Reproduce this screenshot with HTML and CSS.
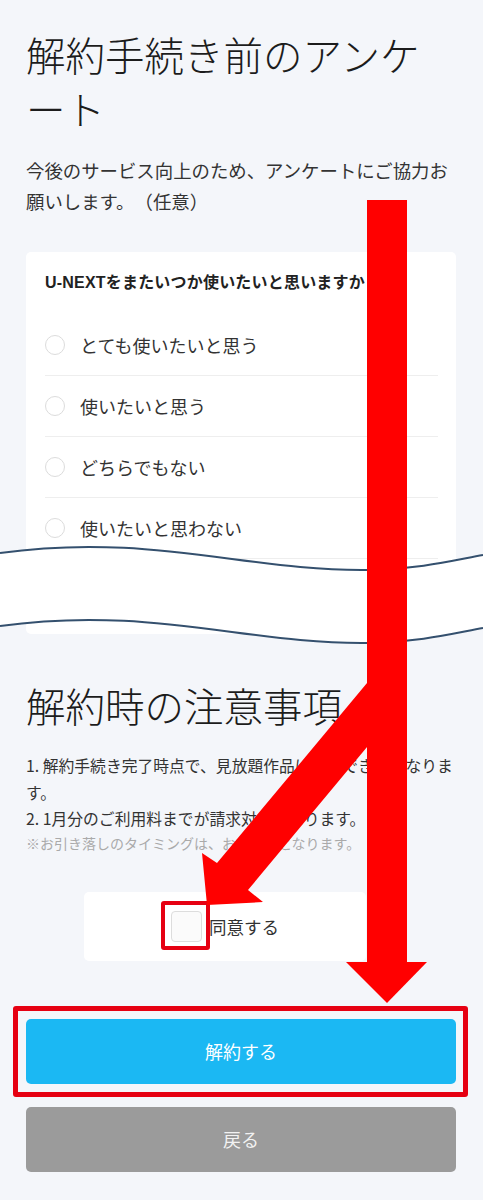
FILE: index.html
```html
<!DOCTYPE html>
<html lang="ja">
<head>
<meta charset="utf-8">
<title>解約手続き</title>
<link rel="stylesheet" href="styles.css">
</head>
<body>
<div class="page">
  <h1 class="title">解約手続き前のアンケート</h1>
  <p class="lead">今後のサービス向上のため、アンケートにご協力お願いします。（任意）</p>

  <section class="survey">
    <p class="q">U-NEXTをまたいつか使いたいと思いますか</p>
    <ul class="opts">
      <li class="opt"><span class="radio"></span><span>とても使いたいと思う</span></li>
      <li class="opt"><span class="radio"></span><span>使いたいと思う</span></li>
      <li class="opt"><span class="radio"></span><span>どちらでもない</span></li>
      <li class="opt"><span class="radio"></span><span>使いたいと思わない</span></li>
      <li class="opt"><span class="radio"></span><span>全く使いたいと思わない</span></li>
    </ul>
  </section>

  <h2 class="title section">解約時の注意事項</h2>
  <div class="notes">
    <p class="note">1. 解約手続き完了時点で、見放題作品は視聴できなくなります。</p>
    <p class="note">2. 1月分のご利用料までが請求対象となります。</p>
    <p class="sub">※お引き落しのタイミングは、お支払日となります。</p>
  </div>

  <label class="agree">
    <span class="check-wrap"><span class="check"></span></span>
    <span class="agree-text">同意する</span>
  </label>

  <div class="primary-wrap">
    <button class="btn primary" type="button">解約する</button>
  </div>
  <button class="btn secondary" type="button">戻る</button>
</div>

<svg class="overlay" viewBox="0 0 483 1200" width="483" height="1200" aria-hidden="true">
  <path class="wave-fill" d="M0,553 C150,532 250,572 370,570 C420,569 455,560 483,555 L483,628 C455,633 420,642 370,643 C250,645 150,605 0,626 Z"/>
  <path class="wave-line" d="M0,553 C150,532 250,572 370,570 C420,569 455,560 483,555"/>
  <path class="wave-line" d="M0,626 C150,605 250,645 370,643 C420,642 455,633 483,628"/>
  <rect class="arrow" x="367" y="200" width="40" height="764"/>
  <polygon class="arrow" points="346,962 427,962 387,1003"/>
  <polygon class="arrow" points="407,635 217,863 202,853 207,905 263,902 248,890 407,699"/>
</svg>
</body>
</html>
```
FILE: styles.css
```css
html, body {
  margin: 0;
  padding: 0;
}

body {
  background: #f4f6fa;
  font-family: "Noto Sans CJK JP", "Noto Sans", sans-serif;
  color: #333;
  position: relative;
  width: 483px;
  min-height: 1200px;
  text-spacing-trim: space-all;
}

.page {
  padding: 27px 27px 40px 26px;
}

.title {
  margin: 0;
  font-size: 39.5px;
  line-height: 54px;
  font-weight: 300;
  color: #1c1c1c;
}

.lead {
  margin: 19.5px 0 0;
  font-size: 18.4px;
  line-height: 31px;
  color: #333;
}

.survey {
  margin-top: 35.5px;
  background: #fff;
  border-radius: 5px;
  padding: 20px 18px 15px 19px;
}

.q {
  margin: 0;
  font-family: "Liberation Sans", "Noto Sans CJK JP", sans-serif;
  font-size: 16px;
  letter-spacing: 0.2px;
  line-height: 22px;
  font-weight: 700;
  color: #222;
}

.opts {
  list-style: none;
  margin: 21px 0 0;
  padding: 0;
}

.opt {
  display: flex;
  align-items: center;
  height: 60px;
  border-bottom: 1px solid #eeeeee;
  font-size: 18px;
  color: #333;
}

.opt:last-child {
  border-bottom: 0;
}

.radio {
  flex: none;
  width: 20px;
  height: 20px;
  box-sizing: border-box;
  border: 1.5px solid #dcdcdc;
  border-radius: 50%;
  margin-right: 15px;
}

.section {
  margin-top: 44px;
}

.notes {
  margin-top: 21px;
}

.note {
  margin: 0;
  font-size: 15.8px;
  line-height: 26.5px;
  color: #333;
}

.sub {
  margin: 0;
  font-size: 14px;
  line-height: 20px;
  color: #aaaaaa;
}

.agree {
  margin: 39px 0 0 58px;
  width: 282px;
  height: 69px;
  background: #fff;
  border-radius: 5px;
  display: flex;
  align-items: center;
  justify-content: center;
}

.check-wrap {
  position: relative;
  display: block;
  width: 31px;
  height: 31px;
}

.check {
  display: block;
  width: 31px;
  height: 31px;
  box-sizing: border-box;
  border: 1px solid #dddddd;
  border-radius: 4px;
  background: #fbfbfb;
}

.check-wrap::after {
  content: "";
  position: absolute;
  top: -10px;
  left: -10px;
  right: -8px;
  bottom: -8px;
  border: 4px solid #e60012;
  border-radius: 3px;
}

.agree-text {
  margin-left: 7px;
  font-size: 17.5px;
  color: #333;
}

.primary-wrap {
  position: relative;
  margin-top: 58px;
}

.primary-wrap::after {
  content: "";
  position: absolute;
  top: -13px;
  left: -13px;
  right: -12px;
  bottom: -13px;
  border: 5px solid #e60012;
  border-radius: 3px;
}

.btn {
  display: block;
  width: 100%;
  height: 65px;
  border: 0;
  border-radius: 5px;
  font-family: inherit;
  font-size: 18px;
  color: #fff;
  padding: 0;
}

.primary {
  background: #1bb8f3;
}

.secondary {
  margin-top: 23px;
  background: #9b9b9b;
  color: #f2f2f2;
}

.overlay {
  position: absolute;
  top: 0;
  left: 0;
  pointer-events: none;
}

.wave-fill {
  fill: #ffffff;
}

.wave-line {
  fill: none;
  stroke: #34506e;
  stroke-width: 2;
}

.arrow {
  fill: #ff0000;
}
```
